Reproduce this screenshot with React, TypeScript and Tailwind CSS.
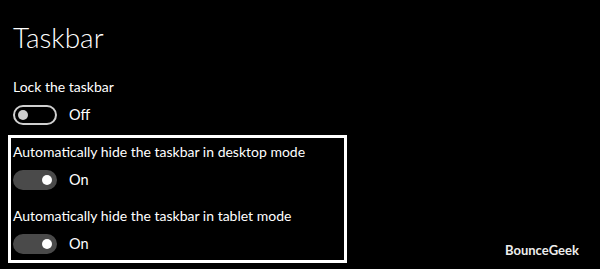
function Toggle({ on }: { on: boolean }): React.ReactElement {
  return on ? (
    <div className="flex h-[20px] w-[44px] items-center justify-end rounded-full bg-[#4a4a4a] pr-[5px]">
      <div className="h-[10px] w-[10px] rounded-full bg-white" />
    </div>
  ) : (
    <div className="flex h-[20px] w-[44px] items-center rounded-full border-2 border-[#cfcfcf] pl-[3px]">
      <div className="h-[10px] w-[10px] rounded-full bg-[#cfcfcf]" />
    </div>
  );
}

function Setting({ label, on }: { label: string; on: boolean }): React.ReactElement {
  return (
    <div className="flex flex-col">
      <p className="text-[14px] leading-[20px] text-white">{label}</p>
      <div className="mt-[8px] flex items-center gap-[12px]">
        <Toggle on={on} />
        <span className="text-[14.5px] leading-[20px] text-white">{on ? 'On' : 'Off'}</span>
      </div>
    </div>
  );
}

export default function App(): React.ReactElement {
  return (
    <div
      className="relative h-[269px] w-[600px] overflow-hidden bg-black px-[13px] pt-[19px]"
      style={{ fontFamily: 'Lato, "Open Sans", sans-serif' }}
    >
      <h1 className="text-[28px] font-light leading-[36px] text-white">Taskbar</h1>
      <div className="mt-[22px]">
        <Setting label="Lock the taskbar" on={false} />
      </div>
      <div className="-ml-[5px] mt-[10px] flex w-[339px] flex-col gap-[16px] border-[3px] border-white pb-[6px] pl-[2px] pt-[4px]">
        <Setting label="Automatically hide the taskbar in desktop mode" on />
        <Setting label="Automatically hide the taskbar in tablet mode" on />
      </div>
      <span className="absolute left-[505px] top-[241px] text-[13px] font-bold text-[#ededed]">BounceGeek</span>
    </div>
  );
}
